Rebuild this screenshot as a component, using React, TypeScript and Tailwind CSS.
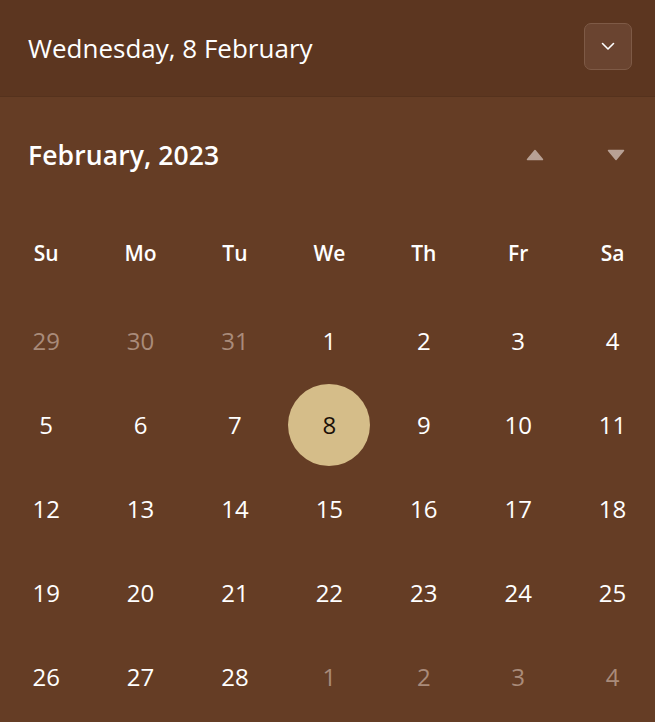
import React from "react";

const weekdays = ["Su", "Mo", "Tu", "We", "Th", "Fr", "Sa"];
const rows: [number, boolean][][] = [
  [[29, true], [30, true], [31, true], [1, false], [2, false], [3, false], [4, false]],
  [[5, false], [6, false], [7, false], [8, false], [9, false], [10, false], [11, false]],
  [[12, false], [13, false], [14, false], [15, false], [16, false], [17, false], [18, false]],
  [[19, false], [20, false], [21, false], [22, false], [23, false], [24, false], [25, false]],
  [[26, false], [27, false], [28, false], [1, true], [2, true], [3, true], [4, true]],
];

export default function App() {
  return (
    <div
      className="w-[655px] h-[722px] bg-[#653d25] text-white overflow-hidden"
      style={{ fontFamily: '"Open Sans", "Noto Sans", sans-serif' }}
    >
      <div className="h-[97px] bg-[#5c3620] border-b border-[#55321d] flex items-center justify-between pl-[28px] pr-[23px] pb-[4px]">
        <span className="text-[26px] leading-none pt-[3px]">Wednesday, 8 February</span>
        <button className="w-[48px] h-[47px] rounded-[7px] bg-[#6a4430] border border-[#7e5a46] flex items-center justify-center">
          <svg width="14" height="9" viewBox="0 0 14 9" fill="none">
            <path d="M1.5 1.5 L7 7 L12.5 1.5" stroke="white" strokeWidth="1.6" strokeLinecap="round" strokeLinejoin="round" />
          </svg>
        </button>
      </div>
      <div className="flex items-center justify-between pl-[28px] pr-[30px] h-[116px]">
        <span className="text-[26.5px] font-semibold pt-[2px] tracking-[0.1px]">February, 2023</span>
        <div className="flex items-center gap-[63px]">
          <svg width="18" height="12" viewBox="0 0 18 12">
            <path d="M9 1.5 L16.5 10.5 L1.5 10.5 Z" fill="#b8a195" stroke="#b8a195" strokeWidth="1.5" strokeLinejoin="round" />
          </svg>
          <svg width="18" height="12" viewBox="0 0 18 12">
            <path d="M1.5 1.5 L16.5 1.5 L9 10.5 Z" fill="#b8a195" stroke="#b8a195" strokeWidth="1.5" strokeLinejoin="round" />
          </svg>
        </div>
      </div>
      <div className="ml-[-1px] grid grid-cols-[repeat(7,94.4px)]">
        {weekdays.map((w) => (
          <div key={w} className="h-[80px] flex items-center justify-center text-[21px] font-semibold pt-[2px]">
            {w}
          </div>
        ))}
      </div>
      <div className="ml-[-1px] grid grid-cols-[repeat(7,94.4px)] pt-[6px]">
        {rows.flat().map(([d, dim], i) => {
          const selected = d === 8 && !dim;
          return (
            <div key={i} className="h-[84px] flex items-center justify-center">
              {selected ? (
                <div className="w-[82px] h-[82px] rounded-full bg-[#d5bd89] text-[#1a1008] flex items-center justify-center text-[24px]">
                  {d}
                </div>
              ) : (
                <span className={"text-[24px] " + (dim ? "text-[#a98b7a]" : "text-white")}>{d}</span>
              )}
            </div>
          );
        })}
      </div>
    </div>
  );
}
